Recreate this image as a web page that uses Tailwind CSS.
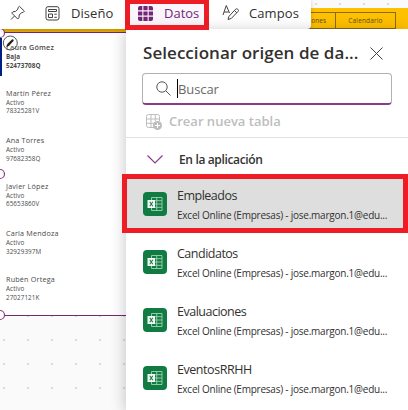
<!DOCTYPE html>
<html lang="es">
<head>
<meta charset="utf-8">
<title>Datos</title>
<script src="https://cdn.jsdelivr.net/npm/@tailwindcss/browser@4"></script>
</head>
<body class="overflow-hidden font-['Open_Sans','Noto_Sans',sans-serif] text-[#323130]">
<svg class="hidden">
  <symbol id="excel" viewBox="0 0 24 24">
    <rect width="24" height="24" rx="4" fill="#107c41"/>
    <path d="M8.500 5.500h10.500v13H8.500zM8.500 8.700h10.500M8.500 12h10.500M8.500 15.300h10.500M13.700 5.500v13" fill="none" stroke="#a3cfb6" stroke-width=".9"/>
    <rect x="4.500" y="8" width="7.500" height="8" fill="#f4faf6"/>
    <path d="M6.800 9.800l3 4.500M9.800 9.800l-3 4.500" stroke="#107c41" stroke-width="1.100"/>
  </symbol>
</svg>
<div class="relative h-[410px] w-[408px] overflow-hidden bg-[#fafafa]">
  <!-- Canvas -->
  <svg class="absolute inset-0 h-full w-full">
    <defs><pattern id="dots" width="24" height="24" patternUnits="userSpaceOnUse"><rect x="3" y="3" width="2" height="2" fill="#dcdcdc"/></pattern></defs>
    <rect width="408" height="410" fill="url(#dots)"/>
  </svg>
  <div class="absolute top-[7.500px] right-0 h-[24px] w-full bg-[#ffc000]"></div>
  <div class="absolute top-[12px] left-[306px] flex h-[17px] w-[90px] border border-[#876a19] text-[6.500px] font-medium leading-[16px] text-[#5e4a10]">
    <div class="w-[29px] border-r border-[#876a19] pr-[9px] text-right">ones</div>
    <div class="flex-1 text-center tracking-[0.150px]">Calendario</div>
  </div>
  <div class="absolute top-[29px] left-0 h-[3px] w-[126px] bg-[#e9ac05]"></div>
  <div class="absolute top-[32px] left-0 flex h-[284px] w-[140px] flex-col border-y border-[#742774] bg-white pt-[9px] pl-[6px] text-[6.300px] tracking-[0.080px] text-[#4a4a4a]">
    <div class="h-[46.400px] shrink-0 font-semibold"><div class="text-[7.200px] leading-[10px] tracking-[0.200px]">Laura Gómez</div><div class="font-bold leading-[9px]">Baja</div><div class="font-bold leading-[9px]">52473708Q</div></div>
    <div class="h-[46.400px] shrink-0"><div class="text-[7.200px] leading-[10px] tracking-[0.200px]">Martín Pérez</div><div class="leading-[9px]">Activo</div><div class="leading-[8px]">78325281V</div></div>
    <div class="h-[46.400px] shrink-0"><div class="text-[7.200px] leading-[10px] tracking-[0.200px]">Ana Torres</div><div class="leading-[9px]">Activo</div><div class="leading-[9px]">97682358Q</div></div>
    <div class="h-[46.400px] shrink-0"><div class="text-[7.200px] leading-[10px] tracking-[0.200px]">Javier López</div><div class="leading-[9px]">Activo</div><div class="leading-[8px]">65653860V</div></div>
    <div class="h-[46.400px] shrink-0"><div class="text-[7.200px] leading-[10px] tracking-[0.200px]">Carla Mendoza</div><div class="leading-[9px]">Activo</div><div class="leading-[9px]">32929397M</div></div>
    <div class="h-[46.400px] shrink-0"><div class="text-[7.200px] leading-[10px] tracking-[0.200px]">Rubén Ortega</div><div class="leading-[9px]">Activo</div><div class="leading-[9px]">27027121K</div></div>
  </div>
  <div class="absolute top-[38px] left-0 h-[38px] w-[1.500px] bg-[#001f83]"></div>
  <!-- Selection handles -->
  <svg class="absolute inset-0 h-full w-[126px]" fill="none">
    <g fill="#fff" stroke="#8a3b8a" stroke-width="1.200"><circle cx="0" cy="33" r="4.500"/><circle cx="0" cy="174" r="4.500"/><circle cx="0" cy="315" r="4.500"/></g>
    <circle cx="10.300" cy="43" r="7" fill="#fff" fill-opacity=".15" stroke="#555"/>
    <path d="M6.300 47.200l1-3.200 4.600-4.500c.9-.7 2.300.5 1.600 1.500l-4.400 4.700z" fill="#222"/>
  </svg>
  <!-- Toolbar -->
  <div class="absolute top-0 left-0 h-[29px] w-[311px] rounded-br bg-white text-[13px] shadow-[0_1px_4px_rgba(0,0,0,0.2)]">
    <svg class="absolute top-[5px] left-[10px] h-[16px] w-[16px]" viewBox="0 0 16 16" fill="none" stroke="#424242" stroke-linejoin="round"><path d="M9.400 1.300l5 4.900-1.200 1.200-1.700.3-2.200 2.300-.4 2.800-1.200 1.200-6-6 1.200-1.200 2.700-.4 2.300-2.300.2-1.600zM4.500 11L1 14.500"/></svg>
    <svg class="absolute top-[6px] left-[45px] h-[15px] w-[15px]" viewBox="0 0 15 15" fill="none" stroke="#424242"><rect x="1" y=".7" width="13" height="13.300" rx="2"/><path d="M3.500 3.500h8v2h-8zM3.500 8h4v3.500h-4zM9.300 8.200h2.500M9.300 11.300h2.500"/></svg>
    <span class="absolute left-[71px] top-[4px] leading-[18px] tracking-[0.050px]">Diseño</span>
    <div class="absolute top-0 left-[125px] h-[30px] w-[84px] border-[5px] border-t-[4px] border-[#ee1c25] bg-[#fbf5fc]"></div>
    <svg class="absolute top-[6px] left-[138px] h-[15px] w-[15px]" viewBox="0 0 15 15" fill="#742774"><path d="M2 0h2.300v4.200H0V2a2 2 0 0 1 2-2zM5.400 0h4.200v4.200H5.400zM10.700 0H13a2 2 0 0 1 2 2v2.200h-4.300zM0 5.400h4.300v4.200H0zM5.400 5.400h4.200v4.200H5.400zM10.700 5.400H15v4.200h-4.300zM0 10.700h4.300V15H2a2 2 0 0 1-2-2zM5.400 10.700h4.200V15H5.400zM10.700 10.700H15V13a2 2 0 0 1-2 2h-2.300z"/></svg>
    <span class="absolute left-[164px] top-[4px] leading-[18px] text-[#742774]">Datos</span>
    <svg class="absolute top-[4px] left-[222px] h-[18px] w-[18px]" viewBox="0 0 18 18" fill="none" stroke="#424242" stroke-linejoin="round"><path d="M1 11L4.300 1.500 7.500 9M2.200 8h4.500M15.800 5.300c.9.900.9 1.600 0 2.400L9.200 14.500l-3.200 1 1-3.200 6.500-7c.7-.7 1.600-.7 2.300 0zM12.500 6.500l2.300 2.300"/></svg>
    <span class="absolute left-[249px] top-[4px] leading-[18px] tracking-[0.100px]">Campos</span>
  </div>
  <!-- Data panel -->
  <div class="absolute top-[29px] left-[126px] h-[381px] w-[282px] bg-white shadow-[-1px_2px_14px_rgba(0,0,0,0.22)]">
    <div class="flex h-[46px] items-center pl-[17px] pr-[25px] pt-[2px]">
      <h2 class="flex-1 whitespace-nowrap text-[17px] font-semibold leading-[24px] tracking-[0.050px]">Seleccionar origen de da...</h2>
      <svg class="h-[13px] w-[13px] shrink-0" viewBox="0 0 13 13" stroke="#424242"><path d="M.5 .5l12 12M12.500 .5l-12 12"/></svg>
    </div>
    <div class="ml-[16px] mt-[-2px] flex h-[32px] w-[250px] items-center rounded border border-b-2 border-[#b3b0ad] border-b-[#8a3b8a] pl-[13px] text-[13px]">
      <svg class="h-[15px] w-[15px]" viewBox="0 0 15 15" fill="none" stroke="#555"><circle cx="6" cy="6" r="5.200"/><path d="M9.700 9.700l4.800 4.800"/></svg>
      <span class="ml-[6px] h-[19px] w-px bg-black"></span><span class="pt-[2px] tracking-[-0.100px] text-[#6b6967]">Buscar</span>
    </div>
    <div class="flex h-[33px] items-center border-b border-[#e0e0e0] pl-[20px] pt-[1px] text-[13px] font-semibold text-[#bdbdbd]">
      <svg class="h-[16px] w-[16px]" viewBox="0 0 16 16" fill="none" stroke="#bdbdbd"><path d="M8 13.500H2.500a2 2 0 0 1-2-2v-9a2 2 0 0 1 2-2h9a2 2 0 0 1 2 2V7M.5 5h13M.5 9.300H8M5 .5v13M9.300 .5V7"/><circle cx="11.500" cy="11.500" r="4.500" fill="#bdbdbd" stroke="none"/><path d="M11.500 9v5M9 11.500h5" stroke="#fff"/></svg>
      <span class="ml-[7px]">Crear nueva tabla</span>
    </div>
    <div class="flex h-[36px] items-center pl-[21px] pt-[7px] text-[12px] font-semibold">
      <svg class="h-[9px] w-[16px]" viewBox="0 0 16 9" fill="none" stroke="#8a3b8a" stroke-width="1.200"><path d="M.5 .5L8 8 15.500 .5"/></svg>
      <span class="ml-[16px] pt-[1px] tracking-[-0.350px]">En la aplicación</span>
    </div>
    <div class="ml-[-4px] flex h-[59px] border-[5px] border-[#ee1c25] bg-[#dedede] pl-[16px]">
      <svg class="mt-[13px] h-[24px] w-[24px] shrink-0"><use href="#excel"/></svg>
      <div class="ml-[10px] whitespace-nowrap pt-[8px]"><div class="text-[12.500px] leading-[18px] tracking-[-0.500px]">Empleados</div><div class="text-[10px] leading-[20px] tracking-[-0.230px]">Excel Online (Empresas) - jose.margon.1@edu...</div></div>
    </div>
    <div class="flex h-[58px] pl-[17px]">
      <svg class="mt-[17px] h-[24px] w-[24px] shrink-0"><use href="#excel"/></svg>
      <div class="ml-[10px] whitespace-nowrap pt-[12px]"><div class="text-[12.500px] leading-[18px] tracking-[-0.500px]">Candidatos</div><div class="text-[10px] leading-[20px] tracking-[-0.230px]">Excel Online (Empresas) - jose.margon.1@edu...</div></div>
    </div>
    <div class="flex h-[58px] pl-[17px]">
      <svg class="mt-[17px] h-[24px] w-[24px] shrink-0"><use href="#excel"/></svg>
      <div class="ml-[10px] whitespace-nowrap pt-[12px]"><div class="text-[12.500px] leading-[18px] tracking-[-0.500px]">Evaluaciones</div><div class="text-[10px] leading-[20px] tracking-[-0.230px]">Excel Online (Empresas) - jose.margon.1@edu...</div></div>
    </div>
    <div class="flex h-[58px] pl-[17px]">
      <svg class="mt-[17px] h-[24px] w-[24px] shrink-0"><use href="#excel"/></svg>
      <div class="ml-[10px] whitespace-nowrap pt-[12px]"><div class="text-[12.500px] leading-[18px] tracking-[-0.450px]">EventosRRHH</div><div class="text-[10px] leading-[20px] tracking-[-0.230px]">Excel Online (Empresas) - jose.margon.1@edu...</div></div>
    </div>
  </div>
  <div class="absolute top-[25px] left-[125px] h-[5px] w-[84px] bg-[#ee1c25]"></div>
</div>
</body>
</html>
